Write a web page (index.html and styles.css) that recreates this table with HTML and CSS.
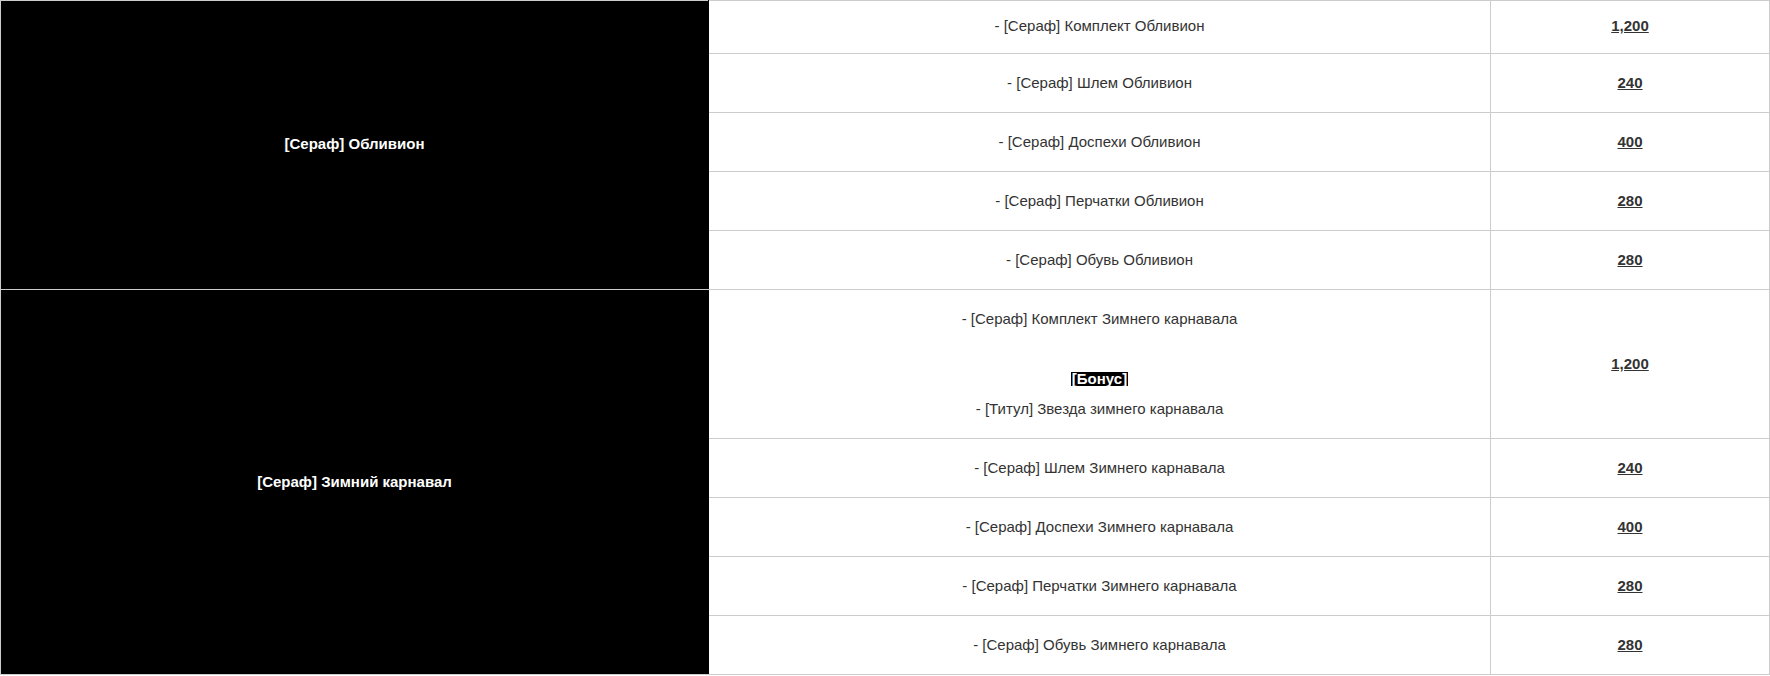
FILE: index.html
```html
<!DOCTYPE html>
<html lang="ru">
<head>
<meta charset="utf-8">
<title>Сераф</title>
<link rel="stylesheet" href="styles.css">
</head>
<body>
<table class="price">
  <colgroup>
    <col class="c-name">
    <col class="c-item">
    <col class="c-cost">
  </colgroup>
  <tbody>
    <tr class="first">
      <td class="group" rowspan="5">[Сераф] Обливион</td>
      <td class="item">- [Сераф] Комплект Обливион</td>
      <td class="cost"><a>1,200</a></td>
    </tr>
    <tr>
      <td class="item">- [Сераф] Шлем Обливион</td>
      <td class="cost"><a>240</a></td>
    </tr>
    <tr>
      <td class="item">- [Сераф] Доспехи Обливион</td>
      <td class="cost"><a>400</a></td>
    </tr>
    <tr>
      <td class="item">- [Сераф] Перчатки Обливион</td>
      <td class="cost"><a>280</a></td>
    </tr>
    <tr>
      <td class="item">- [Сераф] Обувь Обливион</td>
      <td class="cost"><a>280</a></td>
    </tr>
    <tr>
      <td class="group" rowspan="5">[Сераф] Зимний карнавал</td>
      <td class="item">
        <p>- [Сераф] Комплект Зимнего карнавала</p>
        <p>&nbsp;</p>
        <p><span class="bonus">[Бонус]</span></p>
        <p>- [Титул] Звезда зимнего карнавала</p>
      </td>
      <td class="cost"><a>1,200</a></td>
    </tr>
    <tr>
      <td class="item">- [Сераф] Шлем Зимнего карнавала</td>
      <td class="cost"><a>240</a></td>
    </tr>
    <tr>
      <td class="item">- [Сераф] Доспехи Зимнего карнавала</td>
      <td class="cost"><a>400</a></td>
    </tr>
    <tr>
      <td class="item">- [Сераф] Перчатки Зимнего карнавала</td>
      <td class="cost"><a>280</a></td>
    </tr>
    <tr>
      <td class="item">- [Сераф] Обувь Зимнего карнавала</td>
      <td class="cost"><a>280</a></td>
    </tr>
  </tbody>
</table>
</body>
</html>
```

FILE: styles.css
```css
html, body {
  margin: 0;
  padding: 0;
  background: #fff;
}

body {
  font-family: "Liberation Sans", Arial, sans-serif;
  font-size: 15px;
  color: #333;
}

.price {
  width: 1769px;
  border-collapse: collapse;
  table-layout: fixed;
}

.c-name { width: 708px; }
.c-item { width: 782px; }
.c-cost { width: 279px; }

.price td {
  border: 1px solid #cccccc;
  padding: 14px 10px;
  line-height: 30px;
  text-align: center;
  vertical-align: middle;
}

.price tr.first td {
  padding-top: 10px;
  padding-bottom: 12px;
}

.price td.group {
  background: #000;
  color: #fff;
  font-weight: bold;
  border-right-color: #000;
}

.price td.item p {
  margin: 0;
}

.bonus {
  display: inline-block;
  background: #000;
  color: #fff;
  font-weight: bold;
  line-height: 14px;
  padding: 0 1px;
  margin-bottom: 3px;
  vertical-align: middle;
}

.price td.cost a {
  font-weight: bold;
  color: #333;
  text-decoration: underline;
}
```
